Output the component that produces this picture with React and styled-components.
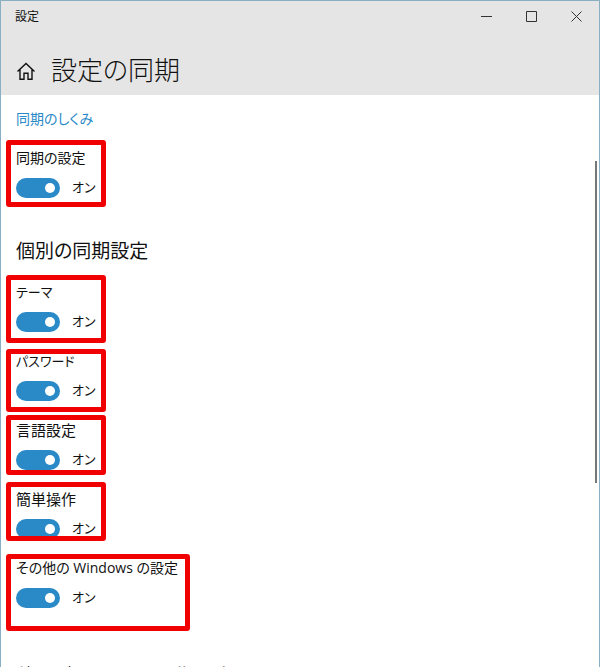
import styled, { createGlobalStyle } from "styled-components";

const GlobalStyle = createGlobalStyle`
  * {
    box-sizing: border-box;
  }
  body {
    margin: 0;
    overflow: hidden;
    color: #111;
    background-color: #fff;
    font-family: "Open Sans", "Noto Sans CJK JP", sans-serif;
    font-feature-settings: "palt";
  }
`;

const Window = styled.div`
  display: flex;
  flex-direction: column;
  height: 100vh;
  border: 1px solid #8aafc4;
  border-bottom: none;
  overflow: hidden;
`;

const Header = styled.header`
  flex: none;
  background-color: #e5e5e5;
`;

const TitleBar = styled.div`
  display: flex;
  align-items: center;
  justify-content: space-between;
  height: 30px;
  padding-left: 14px;
`;

const AppName = styled.span`
  padding-top: 2px;
  font-size: 12px;
  line-height: 20px;
`;

const WindowButtons = styled.div`
  display: flex;
`;

const WindowButton = styled.button`
  display: flex;
  align-items: center;
  justify-content: center;
  width: 45px;
  height: 30px;
  padding: 0;
  border: none;
  background: none;
  color: #333;
`;

const PageBar = styled.div`
  display: flex;
  align-items: center;
  gap: 15px;
  height: 64px;
  padding: 14px 15px 0;
`;

const HomeButton = styled.button`
  display: flex;
  padding: 0;
  border: none;
  background: none;
  color: #111;
`;

const PageTitle = styled.h1`
  margin: 0;
  font-size: 26px;
  font-weight: 300;
  line-height: 40px;
`;

const Body = styled.div`
  display: flex;
  flex: 1;
  min-height: 0;
`;

const Content = styled.main`
  flex: 1;
  padding: 12px 15px 0;
  overflow: hidden;
`;

const ScrollTrack = styled.div`
  flex: none;
  width: 4px;
  padding-top: 66px;
`;

const ScrollThumb = styled.div`
  width: 2px;
  height: 322px;
  background-color: #777;
`;

const HelpLink = styled.a`
  display: block;
  margin-bottom: 16px;
  color: #2a8ac8;
  font-size: 14px;
  line-height: 24px;
  text-decoration: none;
`;

const SectionTitle = styled.h2`
  margin: 0;
  padding: ${(props) => props.$top}px 0 14px;
  font-size: 19px;
  font-weight: 400;
  line-height: 32px;
  white-space: nowrap;
`;

const Setting = styled.div`
  position: relative;
  height: 69px;
`;

const SettingLabel = styled.label`
  display: block;
  font-size: ${(props) => props.$size}px;
  line-height: 22px;
`;

const SwitchRow = styled.div`
  display: flex;
  align-items: center;
  gap: 12px;
  height: 38px;
`;

const SwitchState = styled.span`
  padding-bottom: 2px;
  font-size: 13px;
  line-height: 20px;
`;

const Switch = styled.input`
  appearance: none;
  display: flex;
  align-items: center;
  width: 44px;
  height: 20px;
  margin: 0;
  padding: 0 5px;
  border-radius: 10px;
  background-color: #2a8ac8;
  &::before {
    content: "";
    width: 10px;
    height: 10px;
    border-radius: 50%;
    background-color: #fff;
  }
  &:checked::before {
    margin-left: auto;
  }
`;

// red frame marked over a setting
const Highlight = styled.div`
  position: absolute;
  top: ${(props) => props.$top}px;
  left: -10px;
  width: ${(props) => (props.$wide ? 184 : 100)}px;
  height: ${(props) => props.$height}px;
  border: 5px solid #f00000;
  border-radius: 3px;
  pointer-events: none;
`;

const settings = [
  { id: "theme", label: "テーマ", size: 13, top: -6, height: 68 },
  { id: "password", label: "パスワード", size: 13, top: -1, height: 63 },
  { id: "language", label: "言語設定", size: 15, top: -4, height: 60 },
  { id: "ease", label: "簡単操作", size: 15, top: -6, height: 59 },
  { id: "other", label: "その他の Windows の設定", size: 14, top: -3, height: 77, wide: true },
];

function SyncSetting({ id, label, size, top, height, wide }) {
  return (
    <Setting>
      <SettingLabel htmlFor={id} $size={size}>
        {label}
      </SettingLabel>
      <SwitchRow>
        <Switch id={id} type="checkbox" role="switch" defaultChecked />
        <SwitchState>オン</SwitchState>
      </SwitchRow>
      <Highlight $top={top} $height={height} $wide={wide} />
    </Setting>
  );
}

function App() {
  return (
    <Window>
      <GlobalStyle />
      <Header>
        <TitleBar>
          <AppName>設定</AppName>
          <WindowButtons>
            <WindowButton aria-label="最小化">
              <svg width="11" height="11" stroke="currentColor" fill="none">
                <path d="M0 5.5h11" />
              </svg>
            </WindowButton>
            <WindowButton aria-label="最大化">
              <svg width="11" height="11" stroke="currentColor" fill="none">
                <path d="M.5.5h10v10H.5z" />
              </svg>
            </WindowButton>
            <WindowButton aria-label="閉じる">
              <svg width="11" height="11" stroke="currentColor" fill="none">
                <path d="M.5.5l10 10M10.5.5l-10 10" />
              </svg>
            </WindowButton>
          </WindowButtons>
        </TitleBar>
        <PageBar>
          <HomeButton aria-label="ホーム">
            <svg width="20" height="20" viewBox="0 0 20 20" stroke="currentColor" fill="none" strokeWidth="1.4">
              <path d="M1.500 11.500L10 3.500l8.500 8M4 9.500V19.300h4v-6h4v6h4V9.500" />
            </svg>
          </HomeButton>
          <PageTitle>設定の同期</PageTitle>
        </PageBar>
      </Header>
      <Body>
        <Content>
          <HelpLink href="#help">同期のしくみ</HelpLink>
          <SyncSetting id="sync" label="同期の設定" size={14} top={-7} height={67} />
          <SectionTitle $top={19}>個別の同期設定</SectionTitle>
          {settings.map((item) => (
            <SyncSetting key={item.id} {...item} />
          ))}
          <SectionTitle $top={34}>他のデバイスとの同期設定</SectionTitle>
        </Content>
        <ScrollTrack>
          <ScrollThumb />
        </ScrollTrack>
      </Body>
    </Window>
  );
}

export default App;
